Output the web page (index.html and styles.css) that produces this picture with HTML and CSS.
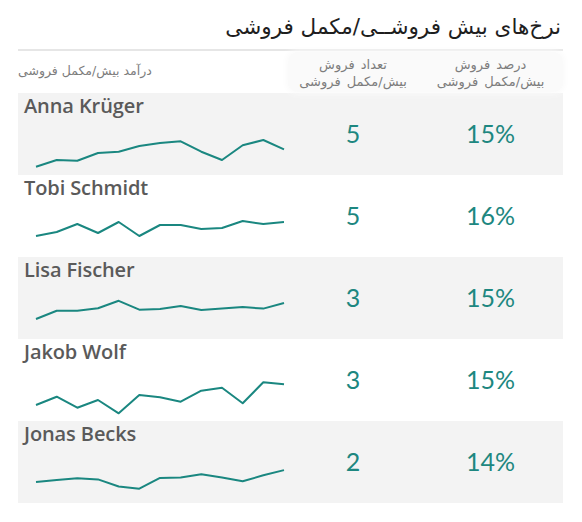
FILE: index.html
```html
<!DOCTYPE html>
<html lang="fa">
<head>
<meta charset="utf-8">
<link rel="stylesheet" href="styles.css">
</head>
<body>
<div class="panel">
  <h1 class="title" dir="rtl">نرخ‌های بیش فروشــی/مکمل فروشی</h1>
  <div class="head">
    <div class="hcell hleft" dir="rtl">درآمد بیش/مکمل فروشی</div>
    <div class="hshade">
      <div class="hcell hmid" dir="rtl">تعداد فروش<br>بیش/مکمل فروشی</div>
      <div class="hcell hmid" dir="rtl">درصد فروش<br>بیش/مکمل فروشی</div>
    </div>
  </div>

  <div class="row shaded">
    <div class="who">
      <div class="name">Anna Krüger</div>
      <svg class="spark" viewBox="0 0 270 54" width="270" height="54"><polyline points="18,45.7 38.7,39 59.3,39.7 80,32 100.7,30.7 121.3,25 142,22 162.7,20.3 183.3,30.7 204,39 224.7,24.3 245.3,19 266,28.3"/></svg>
    </div>
    <div class="num">5</div>
    <div class="num">15%</div>
  </div>

  <div class="row">
    <div class="who">
      <div class="name">Tobi Schmidt</div>
      <svg class="spark" viewBox="0 0 270 54" width="270" height="54"><polyline points="18,33 38.7,29 59.3,21 80,30 100.7,19 121.3,33 142,22 162.7,22 183.3,26 204,25 224.7,18 245.3,21 266,19"/></svg>
    </div>
    <div class="num">5</div>
    <div class="num">16%</div>
  </div>

  <div class="row shaded">
    <div class="who">
      <div class="name">Lisa Fischer</div>
      <svg class="spark" viewBox="0 0 270 54" width="270" height="54"><polyline points="18,34 38.7,25.8 59.3,25.8 80,23.2 100.7,15.8 121.3,24.7 142,24 162.7,21 183.3,25.1 204,23.6 224.7,22.1 245.3,23.6 266,18"/></svg>
    </div>
    <div class="num">3</div>
    <div class="num">15%</div>
  </div>

  <div class="row">
    <div class="who">
      <div class="name">Jakob Wolf</div>
      <svg class="spark" viewBox="0 0 270 54" width="270" height="54"><polyline points="18,38 38.7,29.7 59.3,40.7 80,33 100.7,46.3 121.3,28 142,30.3 162.7,34.7 183.3,23.7 204,20.7 224.7,36.3 245.3,15.3 266,17.3"/></svg>
    </div>
    <div class="num">3</div>
    <div class="num">15%</div>
  </div>

  <div class="row shaded">
    <div class="who">
      <div class="name">Jonas Becks</div>
      <svg class="spark" viewBox="0 0 270 54" width="270" height="54"><polyline points="18,33 38.7,31.1 59.3,29.3 80,30.4 100.7,37.5 121.3,39.7 142,28.9 162.7,28.5 183.3,25.2 204,28.5 224.7,32.3 245.3,26.3 266,21.1"/></svg>
    </div>
    <div class="num">2</div>
    <div class="num">14%</div>
  </div>
</div>
</body>
</html>
```
FILE: styles.css
```css
html, body {
  margin: 0;
  padding: 0;
  background: #ffffff;
}

.panel {
  width: 545px;
  margin-left: 18px;
  font-family: "Lato", "Liberation Sans", sans-serif;
}

.title {
  margin: 0;
  height: 51px;
  box-sizing: border-box;
  padding: 12px 2px 0 0;
  font-family: "DejaVu Sans", sans-serif;
  font-size: 21.5px;
  font-weight: normal;
  color: #1e1e1e;
  line-height: 30px;
  border-bottom: 2px solid #e6e6e6;
}

.head {
  display: grid;
  grid-template-columns: 270px 275px;
  height: 42px;
  align-items: center;
}

.hshade {
  display: grid;
  grid-template-columns: 130px 145px;
  height: 40px;
  align-items: center;
  background: #fafafa;
  border-radius: 10px;
  box-shadow: 0 0 6px 2px #fafafa;
}

.hcell {
  font-family: "DejaVu Sans", sans-serif;
  font-size: 12.5px;
  color: #7d7d7d;
  line-height: 17px;
}

.hleft {
  text-align: left;
  direction: rtl;
  unicode-bidi: plaintext;
  padding-bottom: 4px;
}

.hmid {
  text-align: center;
  font-size: 13px;
  word-spacing: 2px;
  padding-top: 2px;
}

.row {
  display: grid;
  grid-template-columns: 270px 130px 145px;
  height: 82px;
  align-items: center;
}

.shaded {
  background: #f3f3f3;
}

.who {
  display: flex;
  flex-direction: column;
  height: 82px;
}

.name {
  height: 28px;
  padding: 0 0 0 6px;
  box-sizing: border-box;
  font-family: "Open Sans", "Liberation Sans", sans-serif;
  font-size: 20px;
  font-weight: 600;
  color: #5a5a5a;
  line-height: 26px;
  letter-spacing: -0.1px;
  white-space: nowrap;
}

.spark {
  display: block;
}

.spark polyline {
  fill: none;
  stroke: #1a8780;
  stroke-width: 2;
  stroke-linejoin: round;
}

.num {
  text-align: center;
  font-size: 25px;
  font-weight: 400;
  color: #1d8780;
  line-height: 30px;
  padding-bottom: 2px;
}
```
